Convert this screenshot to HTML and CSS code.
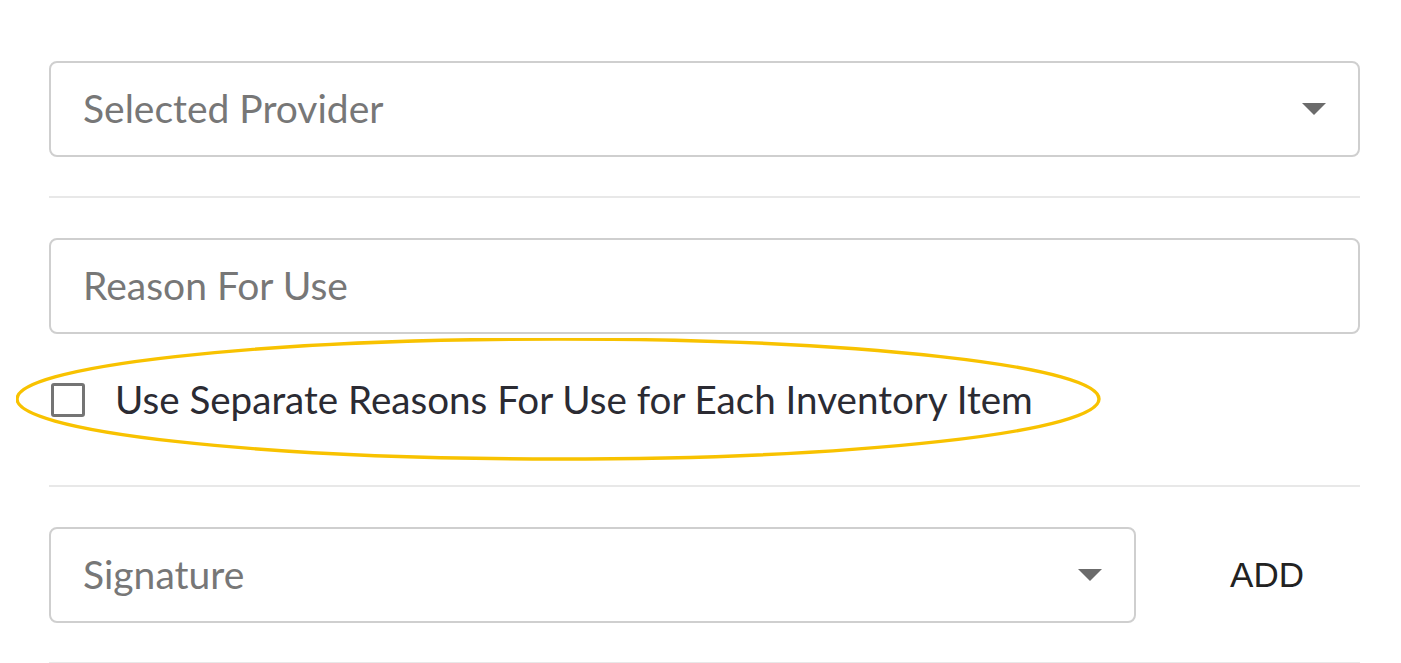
FILE: index.html
```html
<!DOCTYPE html>
<html>
<head>
<meta charset="utf-8">
<link rel="stylesheet" href="styles.css">
</head>
<body>
<div class="form">
  <div class="field select first">
    <span class="placeholder">Selected Provider</span>
    <span class="caret"></span>
  </div>
  <hr class="divider">
  <div class="field input">
    <span class="placeholder">Reason For Use</span>
  </div>
  <label class="check-row">
    <span class="checkbox"></span>
    <span class="check-label">Use Separate Reasons For Use for Each Inventory Item</span>
    <svg class="highlight" width="1090" height="126" viewBox="0 0 1090 126">
      <ellipse cx="542" cy="61" rx="541" ry="60" fill="none" stroke="#f8c200" stroke-width="3.4"/>
    </svg>
  </label>
  <hr class="divider">
  <div class="sig-row">
    <div class="field select sig">
      <span class="placeholder">Signature</span>
      <span class="caret"></span>
    </div>
    <button class="add">ADD</button>
  </div>
  <hr class="divider bottom">
</div>
</body>
</html>
```
FILE: styles.css
```css
html, body {
  margin: 0;
  padding: 0;
  background: #ffffff;
}
.form {
  width: 1311px;
  margin-left: 49px;
  padding-top: 61px;
  font-family: Lato, "Noto Sans", sans-serif;
}
.field {
  box-sizing: border-box;
  height: 96px;
  border: 2px solid #cfcfcf;
  border-radius: 8px;
  display: flex;
  align-items: center;
  padding-left: 32px;
  padding-right: 32px;
  background: #fff;
}
.placeholder {
  font-size: 39px;
  color: #777777;
  flex: 1;
  padding-bottom: 2px;
}
.caret {
  width: 0;
  height: 0;
  border-left: 12px solid transparent;
  border-right: 12px solid transparent;
  border-top: 12px solid #6b6b6b;
}
.divider {
  border: 0;
  height: 2px;
  background: #e8e8e8;
  margin: 39px 0 40px 0;
}
.divider.bottom {
  margin: 39px 0 0 0;
}
.check-row {
  position: relative;
  box-sizing: border-box;
  display: flex;
  align-items: center;
  height: 113px;
  padding-top: 18px;
  margin-bottom: -1px;
}
.checkbox {
  box-sizing: border-box;
  width: 34px;
  height: 34px;
  border: 3px solid #747474;
  border-radius: 3px;
  margin-left: 2px;
}
.check-label {
  font-size: 38.6px;
  color: #2b2b33;
  margin-left: 30px;
  padding-bottom: 2px;
}
.highlight {
  position: absolute;
  left: -33px;
  top: 4px;
  pointer-events: none;
}
.sig-row {
  display: flex;
  align-items: center;
}
.sig {
  width: 1087px;
  flex: none;
}
.add {
  flex: 1;
  background: none;
  border: 0;
  font-family: "Liberation Sans", Arial, sans-serif;
  font-size: 35px;
  color: #222222;
  padding: 0 0 0 38px;
  height: 96px;
  cursor: pointer;
}
```
